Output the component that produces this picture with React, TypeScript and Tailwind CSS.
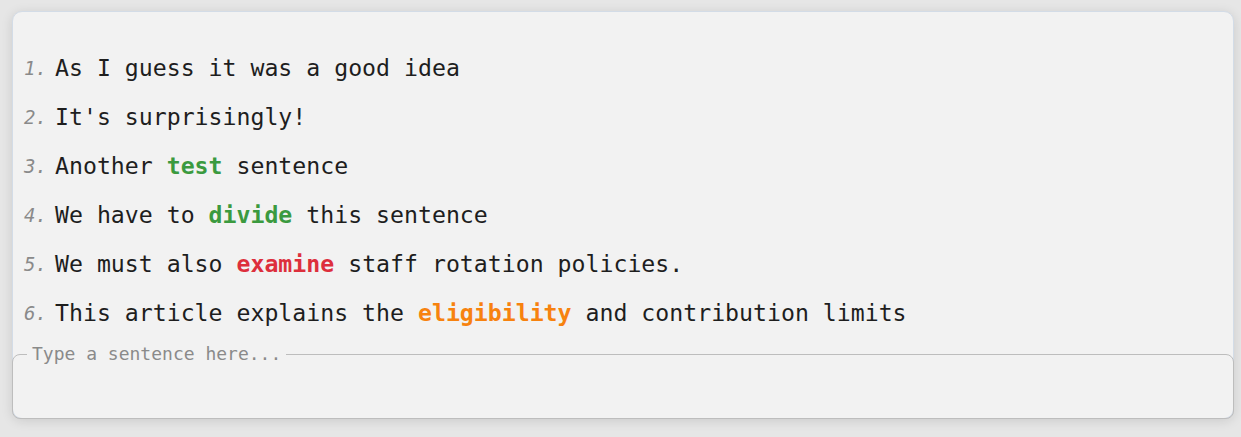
import React from 'react';

type Part = { text: string; tone?: 'green' | 'red' | 'orange' };

const SENTENCES: Part[][] = [
  [{ text: 'As I guess it was a good idea' }],
  [{ text: "It's surprisingly!" }],
  [{ text: 'Another ' }, { text: 'test', tone: 'green' }, { text: ' sentence' }],
  [{ text: 'We have to ' }, { text: 'divide', tone: 'green' }, { text: ' this sentence' }],
  [{ text: 'We must also ' }, { text: 'examine', tone: 'red' }, { text: ' staff rotation policies.' }],
  [
    { text: 'This article explains the ' },
    { text: 'eligibility', tone: 'orange' },
    { text: ' and contribution limits' },
  ],
];

const TONE_CLASS = {
  green: 'font-bold text-[#3b9a3f]',
  red: 'font-bold text-[#dd2f3c]',
  orange: 'font-bold text-[#f7820f]',
};

const mono = "font-['DejaVu_Sans_Mono','Liberation_Mono',monospace]";

export default function App() {
  return (
    <div className="h-[437px] w-[1241px] bg-[#e6e6e6] pt-[11px]">
      <div className="ml-[12px] w-[1222px] rounded-[10px] border border-[#d3dce7] bg-[#f2f2f2] shadow-[0_2px_12px_rgba(0,0,0,0.12)]">
        {/* Sentence list */}
        <ol className={`${mono} pt-[32px]`}>
          {SENTENCES.map((parts, i) => (
            <li key={i} className="flex h-[49px] items-center pl-[11px]">
              <span className="w-[31px] text-[19px] italic text-[#8a8a8a]">{i + 1}.</span>
              <span className="whitespace-pre text-[23.2px] text-[#1e1e1e]">
                {parts.map((p, j) => (
                  <span key={j} className={p.tone ? TONE_CLASS[p.tone] : ''}>
                    {p.text}
                  </span>
                ))}
              </span>
            </li>
          ))}
        </ol>

        {/* Input box */}
        <fieldset className="-mx-px -mb-px mt-[5px] h-[76px] rounded-[8px] border border-[#bdbdbd] px-[14px]">
          <legend className={`${mono} px-[5px] text-[18px] leading-[22px] text-[#8a8a8a]`}>
            Type a sentence here...
          </legend>
        </fieldset>
      </div>
    </div>
  );
}
